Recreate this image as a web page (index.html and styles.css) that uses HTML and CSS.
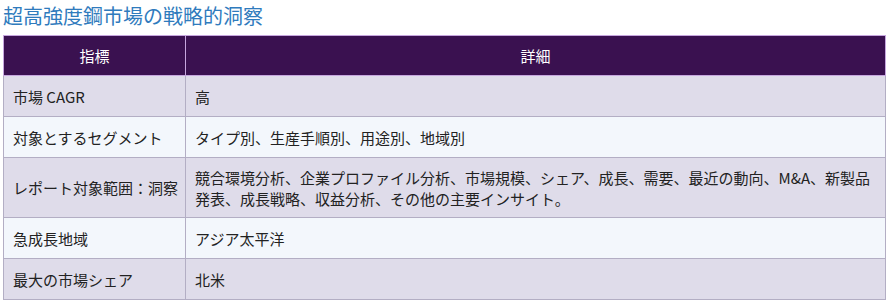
FILE: index.html
```html
<!DOCTYPE html>
<html lang="ja">
<head>
<meta charset="utf-8">
<link rel="stylesheet" href="styles.css">
</head>
<body>
<div class="page">
  <h2 class="title">超高強度鋼市場の戦略的洞察</h2>
  <table class="insights">
    <colgroup><col class="col-key"><col class="col-val"></colgroup>
    <thead>
      <tr><th>指標</th><th>詳細</th></tr>
    </thead>
    <tbody>
      <tr class="odd"><td>市場 CAGR</td><td>高</td></tr>
      <tr class="even"><td>対象とするセグメント</td><td>タイプ別、生産手順別、用途別、地域別</td></tr>
      <tr class="odd"><td>レポート対象範囲：洞察</td><td>競合環境分析、企業プロファイル分析、市場規模、シェア、成長、需要、最近の動向、M&amp;A、新製品発表、成長戦略、収益分析、その他の主要インサイト。</td></tr>
      <tr class="even"><td>急成長地域</td><td>アジア太平洋</td></tr>
      <tr class="odd"><td>最大の市場シェア</td><td>北米</td></tr>
    </tbody>
  </table>
</div>
</body>
</html>
```
FILE: styles.css
```css
html, body {
  margin: 0;
  padding: 0;
  background: #ffffff;
}
.page {
  padding: 4px 3px 0 3px;
  font-family: "Noto Sans CJK JP", "Noto Sans", sans-serif;
  color: #222222;
}
.title {
  margin: 0 0 7px 0;
  font-size: 20px;
  line-height: 24px;
  font-weight: normal;
  color: #2f7bbd;
}
.insights {
  width: 883px;
  table-layout: fixed;
  border-collapse: collapse;
  font-size: 15px;
  line-height: 21px;
}
.insights .col-key {
  width: 182px;
}
.insights th {
  background: #3a1150;
  color: #ffffff;
  font-weight: normal;
  text-align: center;
  border: 1px solid #c6a6de;
  height: 39px;
  padding: 0 4px;
}
.insights td {
  border: 1px solid #b3aec4;
  padding: 8.5px 15px 8.5px 9px;
  text-align: left;
  vertical-align: middle;
}
.insights td:first-child {
  padding-right: 3px;
}
.insights tbody tr {
  height: 41px;
}
.insights tr.odd td {
  background: #dfdcea;
}
.insights tr.even td {
  background: #f3f7fc;
}
```
